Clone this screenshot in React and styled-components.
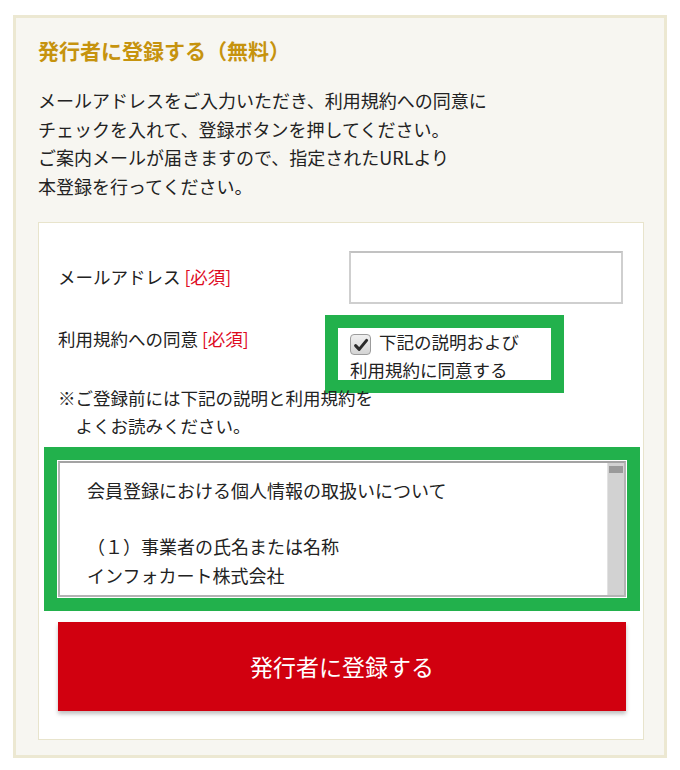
import React from "react";
import styled, { createGlobalStyle } from "styled-components";

const GlobalStyle = createGlobalStyle`
  html, body {
    margin: 0;
    padding: 0;
    background: #fff;
  }
  body {
    font-family: "Noto Sans CJK JP", "Noto Sans", sans-serif;
    color: #222;
  }
`;

const termsLines = [
  "会員登録における個人情報の取扱いについて",
  "",
  "（１）事業者の氏名または名称",
  "インフォカート株式会社",
  "（２）個人情報保護管理者",
  "管理部　個人情報保護担当",
  "（３）個人情報の利用目的",
  "発行者登録の受付、ご本人確認、",
  "ご連絡およびサービス提供のため",
];

const App = () => {
  return (
    <>
      <GlobalStyle />
      <Panel>
        <Title>発行者に登録する（無料）</Title>
        <Lead>
          メールアドレスをご入力いただき、利用規約への同意に
          <br />
          チェックを入れて、登録ボタンを押してください。
          <br />
          ご案内メールが届きますので、指定されたURLより
          <br />
          本登録を行ってください。
        </Lead>

        <FormCard>
          <Row>
            <Label>
              メールアドレス <Required>[必須]</Required>
            </Label>
            <Input type="email" />
          </Row>

          <Row $top>
            <Label $top>
              利用規約への同意 <Required>[必須]</Required>
            </Label>
            <div>
              <AgreeBox>
                <CheckBox>
                  <svg width="16" height="16" viewBox="0 0 16 16">
                    <path
                      d="M2.6 8.6 L6.2 12.4 L13.6 3.4"
                      fill="none"
                      stroke="#2b2b2b"
                      strokeWidth="3"
                      strokeLinecap="round"
                      strokeLinejoin="round"
                    />
                  </svg>
                </CheckBox>
                下記の説明および
                <br />
                利用規約に同意する
              </AgreeBox>
            </div>
          </Row>

          <Note>
            ※ご登録前には下記の説明と利用規約を
            <br />
            よくお読みください。
          </Note>

          <TermsFrame>
            <TermsText>
              {termsLines.map((line, i) => (
                <TermsLine key={i}>{line || "\u00a0"}</TermsLine>
              ))}
            </TermsText>
            <ScrollTrack>
              <ScrollThumb />
            </ScrollTrack>
          </TermsFrame>

          <SubmitButton type="button">発行者に登録する</SubmitButton>
        </FormCard>
      </Panel>
    </>
  );
};

export default App;

const Panel = styled.div`
  margin: 15px 13px;
  width: 654px;
  box-sizing: border-box;
  background: #f7f6f1;
  border: 3px solid #ece8d2;
  padding: 18px 20px 15px 22px;
`;

const Title = styled.h2`
  margin: 0;
  font-size: 21px;
  line-height: 28px;
  font-weight: 700;
  color: #c6930e;
`;

const Lead = styled.p`
  margin: 22px 0 21px;
  font-size: 18px;
  line-height: 28.7px;
  color: #222;
`;

const FormCard = styled.div`
  background: #fff;
  border: 1px solid #e8e4cc;
  padding: 28px 17px 28px 19px;
`;

const Row = styled.div`
  display: grid;
  grid-template-columns: 291px 1fr;
  align-items: ${(p) => (p.$top ? "start" : "center")};
  margin-top: ${(p) => (p.$top ? "24px" : "0")};
  margin-bottom: ${(p) => (p.$top ? "4px" : "0")};
`;

const Label = styled.div`
  font-size: 17.5px;
  line-height: 28px;
  color: #222;
  margin-top: ${(p) => (p.$top ? "-3px" : "0")};
`;

const Required = styled.span`
  color: #de0a1e;
`;

const Input = styled.input`
  box-sizing: border-box;
  width: 274px;
  height: 53px;
  border: 2px solid #cfcfcf;
  border-top-color: #c2c2c2;
  background: #fff;
  outline: none;
  font-size: 17px;
`;

const AgreeBox = styled.label`
  display: block;
  box-sizing: border-box;
  width: 213px;
  height: 52px;
  margin-left: -11px;
  padding-left: 12px;
  font-size: 17.5px;
  line-height: 28px;
  color: #222;
  background: #fff;
  outline: 13px solid #22b14c;
  white-space: nowrap;
`;

const CheckBox = styled.span`
  display: inline-flex;
  align-items: center;
  justify-content: center;
  box-sizing: border-box;
  width: 21px;
  height: 21px;
  margin-right: 8px;
  vertical-align: -4px;
  border: 1px solid #9c9c9c;
  border-radius: 4px;
  background: linear-gradient(#f0f0f0, #d4d4d4);
`;

const Note = styled.p`
  margin: 0;
  padding-left: 1em;
  text-indent: -1em;
  font-size: 17.5px;
  line-height: 28px;
  color: #222;
`;

const TermsFrame = styled.div`
  display: flex;
  box-sizing: border-box;
  height: 136px;
  margin-top: 21px;
  border: 2px solid #b4b4b4;
  border-top-color: #a3a3a3;
  background: #fff;
  outline: 13px solid #22b14c;
  outline-offset: 1px;
  box-shadow: 0 0 0 1px #fff;
`;

const TermsText = styled.div`
  flex: 1;
  overflow: hidden;
  padding: 13px 20px 0 27px;
`;

const TermsLine = styled.div`
  font-size: 18px;
  line-height: 28.3px;
  color: #222;
  white-space: nowrap;
`;

const ScrollTrack = styled.div`
  width: 17px;
  background: #d2d2d2;
  border-left: 1px solid #e2e2e2;
  padding: 3px 1px 0;
  box-sizing: border-box;
`;

const ScrollThumb = styled.div`
  height: 7px;
  background: #9a9a9a;
`;

const SubmitButton = styled.button`
  display: block;
  width: 100%;
  height: 89px;
  margin-top: 25px;
  border: none;
  background: #d1000f;
  color: #fff;
  font-family: "Noto Sans CJK JP", "Noto Sans", sans-serif;
  font-size: 23px;
  cursor: pointer;
  box-shadow: 0 3px 4px rgba(0, 0, 0, 0.25);
`;
